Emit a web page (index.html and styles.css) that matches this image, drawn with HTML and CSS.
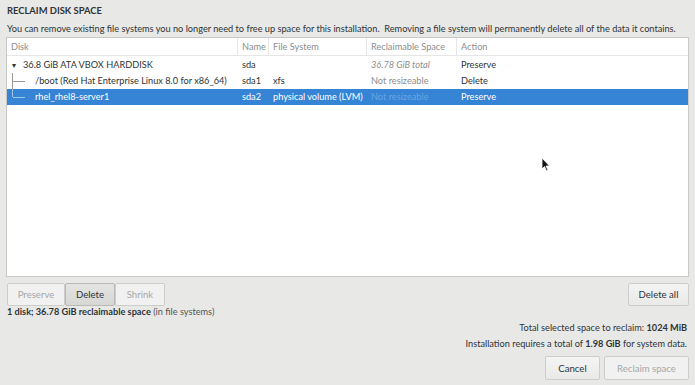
FILE: index.html
```html
<!DOCTYPE html>
<html lang="en">
<head>
  <meta charset="UTF-8">
  <title>Reclaim Disk Space</title>
  <link rel="stylesheet" href="styles.css">
</head>
<body>
  <div class="dialog">
    <h1 class="title">RECLAIM DISK SPACE</h1>
    <p class="intro">You can remove existing file systems you no longer need to free up space for this installation.&nbsp; Removing a file system will permanently delete all of the data it contains.</p>

    <!-- Disk table -->
    <div class="table">
      <div class="row head">
        <div class="c disk">Disk</div>
        <div class="c name">Name</div>
        <div class="c fs">File System</div>
        <div class="c space">Reclaimable Space</div>
        <div class="c action">Action</div>
      </div>
      <div class="row">
        <div class="c disk"><span class="arrow">&#9662;</span>36.8 GiB ATA VBOX HARDDISK</div>
        <div class="c name">sda</div>
        <div class="c fs"></div>
        <div class="c space dim"><i>36.78 GiB total</i></div>
        <div class="c action">Preserve</div>
      </div>
      <div class="row">
        <div class="c disk child"><span class="tree mid"></span>/boot (Red Hat Enterprise Linux 8.0 for x86_64)</div>
        <div class="c name">sda1</div>
        <div class="c fs">xfs</div>
        <div class="c space dim">Not resizeable</div>
        <div class="c action">Delete</div>
      </div>
      <div class="row selected">
        <div class="c disk child"><span class="tree last"></span>rhel_rhel8-server1</div>
        <div class="c name">sda2</div>
        <div class="c fs">physical volume (LVM)</div>
        <div class="c space faint">Not resizeable</div>
        <div class="c action">Preserve</div>
      </div>
      <svg class="cursor" width="10" height="15" viewBox="0 0 10 15"><path d="M1 1 L1 12 L3.5 9.5 L5.5 14 L7 13.3 L5 9 L8.5 9 Z" fill="#111" stroke="#fff" stroke-width="0.8"/></svg>
    </div>

    <div class="toolbar">
      <div class="group">
        <button class="btn off">Preserve</button>
        <button class="btn on">Delete</button>
        <button class="btn off">Shrink</button>
      </div>
      <button class="btn wide">Delete all</button>
    </div>
    <p class="summary"><b>1 disk; 36.78 GiB reclaimable space</b> (in file systems)</p>

    <div class="totals">
      <p>Total selected space to reclaim: <b>1024 MiB</b></p>
      <p>Installation requires a total of <b>1.98 GiB</b> for system data.</p>
    </div>
    <div class="footer">
      <button class="btn cancel">Cancel</button>
      <button class="btn off reclaim">Reclaim space</button>
    </div>
  </div>
</body>
</html>
```

FILE: styles.css
```css
html, body {
  margin: 0;
  padding: 0;
  background-color: #e8e8e7;
}
body {
  font-family: Lato, "DejaVu Sans", sans-serif;
  font-size: 9.2px;
  color: #2e3436;
}
.dialog {
  padding: 3px 6px 0 6px;
  width: 683px;
}
.title {
  margin: 0;
  height: 16px;
  line-height: 16px;
  font-size: 9.4px;
  font-weight: 700;
  padding-left: 1px;
}
.intro {
  margin: 3px 0 0 1px;
  height: 14px;
  line-height: 14px;
  white-space: nowrap;
}

/* Table */
.table {
  position: relative;
  margin-top: 1px;
  height: 238px;
  background: #fff;
  border: 1px solid #c8c8c6;
}
.row {
  display: flex;
  height: 16px;
  line-height: 16px;
}
.row.head {
  height: 17px;
  line-height: 17px;
  color: #8b8e8f;
  border-bottom: 1px solid #e6e6e6;
  margin-bottom: 1px;
}
.head .c {
  border-right: 1px solid #e6e6e6;
}
.head .c.action {
  border-right: none;
}
.c {
  box-sizing: border-box;
  padding-left: 4px;
  white-space: nowrap;
  overflow: hidden;
}
.disk { width: 231px; }
.name { width: 31px; }
.fs { width: 98px; }
.space { width: 90px; }
.action { flex: 1; }
.row:not(.head) .disk { padding-left: 2px; }
.dim { color: #8b8e8f; }
.arrow {
  display: inline-block;
  width: 10px;
  margin-right: 4px;
  font-size: 8px;
  text-align: center;
  color: #2e3436;
}
.disk.child {
  display: flex;
  align-items: center;
}
.tree {
  position: relative;
  flex-shrink: 0;
  display: inline-block;
  width: 24px;
  height: 16px;
  margin-right: 2px;
}
.tree::before {
  content: "";
  position: absolute;
  left: 3px;
  top: 0;
  width: 1px;
  background: #9a9a9a;
}
.tree.mid::before { height: 16px; }
.tree.last::before { height: 8px; }
.tree::after {
  content: "";
  position: absolute;
  left: 4px;
  top: 8px;
  width: 12px;
  height: 1px;
  background: #9a9a9a;
}
.row.selected {
  background: #3584d6;
  color: #fff;
}
.row.selected .tree::before,
.row.selected .tree::after {
  background: #9fc4ea;
}
.faint { color: #6aa4e0; }
.cursor {
  position: absolute;
  left: 534px;
  top: 119px;
}

/* Buttons */
.toolbar {
  display: flex;
  justify-content: space-between;
  margin-top: 6px;
  padding-left: 1px;
}
.group {
  display: flex;
}
.btn {
  font-family: inherit;
  font-size: 9.6px;
  height: 23px;
  padding: 0;
  border: 1px solid #cdcdcc;
  border-radius: 2px;
  background: linear-gradient(#f4f4f4, #e9e9e8);
  color: #2e3436;
}
.group .btn { width: 50px; }
.group .btn:first-child { width: 58px; }
.btn.off {
  color: #a6a8a8;
  background: #f1f1f1;
}
.btn.on {
  background: linear-gradient(#e4e4e3, #d7d7d6);
  border-color: #b8b8b7;
}
.btn.wide { width: 61px; }
.summary {
  margin: -1px 0 0 1px;
  height: 14px;
  line-height: 14px;
  color: #555753;
}
.summary b { color: #2e3436; font-weight: 700; }
.totals {
  margin-top: 1px;
  text-align: right;
  padding-right: 2px;
}
.totals p {
  margin: 0;
  height: 16px;
  line-height: 16px;
}
.totals b { font-weight: 700; }
.footer {
  display: flex;
  justify-content: flex-end;
  gap: 4px;
  margin-top: 4px;
}
.btn.cancel { width: 55px; height: 24px; }
.btn.reclaim { width: 85px; height: 24px; }
```
